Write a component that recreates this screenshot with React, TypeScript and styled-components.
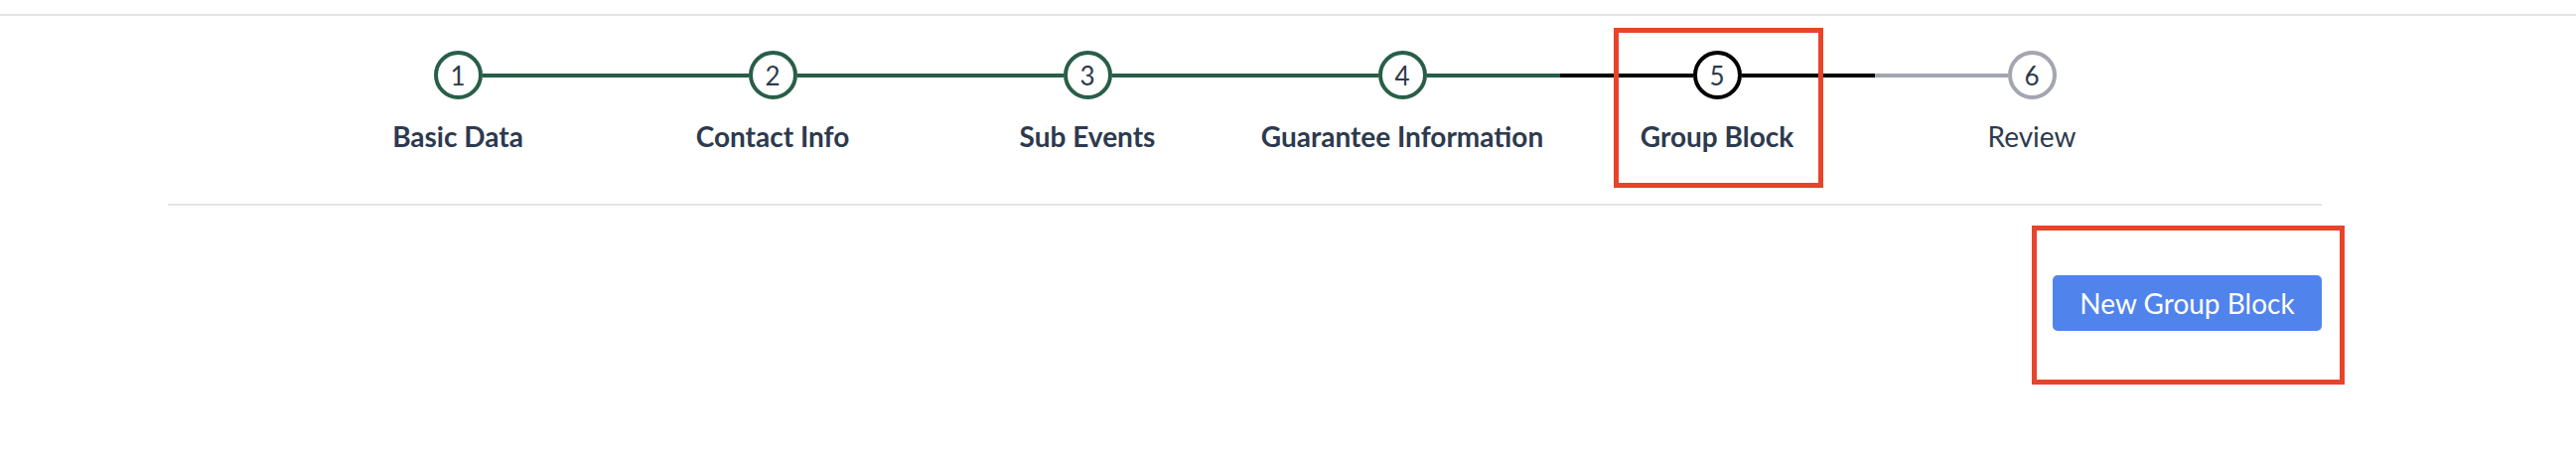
import styled, { createGlobalStyle } from "styled-components";

type Status = "done" | "active" | "todo";

const GlobalStyle = createGlobalStyle`
  body {
    margin: 0;
    background: #ffffff;
    font-family: "Lato", "Noto Sans", sans-serif;
  }
`;

const palette: Record<Status, string> = {
  done: "#285e47",
  active: "#000000",
  todo: "#a3a6b0",
};

const Page = styled.div`
  padding-top: 14px;
  min-height: 460px;
`;

const TopRule = styled.div`
  height: 2px;
  background: #e4e4e6;
`;

const Content = styled.div`
  margin-left: 169px;
  width: 2169px;
`;

const Stepper = styled.div`
  display: flex;
  justify-content: center;
  padding: 35px 0 47px;
`;

const Step = styled.div`
  position: relative;
  width: 317px;
  display: flex;
  flex-direction: column;
  align-items: center;
`;

const Track = styled.div`
  width: 100%;
  display: flex;
  align-items: center;
`;

const HalfLine = styled.div<{ $color: string; $hidden?: boolean }>`
  flex: 1;
  height: 4px;
  background: ${(p) => (p.$hidden ? "transparent" : p.$color)};
`;

const Circle = styled.div<{ $color: string }>`
  box-sizing: border-box;
  width: 49px;
  height: 49px;
  border-radius: 50%;
  border: 4px solid ${(p) => p.$color};
  display: flex;
  align-items: center;
  justify-content: center;
  font-size: 26px;
  line-height: 1;
  color: #2d3a4e;
`;

const Label = styled.div<{ $bold: boolean }>`
  margin-top: 16px;
  font-size: 28px;
  line-height: 42px;
  font-weight: ${(p) => (p.$bold ? 700 : 400)};
  color: #2d3a4e;
  white-space: nowrap;
`;

const Divider = styled.div`
  height: 2px;
  background: #e4e4e8;
`;

const Actions = styled.div`
  display: flex;
  justify-content: flex-end;
  padding-top: 70px;
`;

const ButtonWrap = styled.div`
  position: relative;
`;

const PrimaryButton = styled.button`
  height: 56px;
  width: 271px;
  border: none;
  border-radius: 5px;
  background: #5083ec;
  color: #ffffff;
  font-family: "Lato", "Noto Sans", sans-serif;
  font-size: 28px;
  cursor: pointer;
`;

const Highlight = styled.div<{ $top: number; $left: number; $width: number; $height: number }>`
  position: absolute;
  box-sizing: border-box;
  top: ${(p) => p.$top}px;
  left: ${(p) => p.$left}px;
  width: ${(p) => p.$width}px;
  height: ${(p) => p.$height}px;
  border: 5px solid #e8432b;
  pointer-events: none;
`;

const steps: { label: string; status: Status }[] = [
  { label: "Basic Data", status: "done" },
  { label: "Contact Info", status: "done" },
  { label: "Sub Events", status: "done" },
  { label: "Guarantee Information", status: "done" },
  { label: "Group Block", status: "active" },
  { label: "Review", status: "todo" },
];

const App = () => {
  return (
    <Page>
      <GlobalStyle />
      <TopRule />
      <Content>
        <Stepper>
          {steps.map((s, i) => (
            <Step key={s.label}>
              <Track>
                <HalfLine $color={palette[s.status]} $hidden={i === 0} />
                <Circle $color={palette[s.status]}>{i + 1}</Circle>
                <HalfLine $color={palette[s.status]} $hidden={i === steps.length - 1} />
              </Track>
              <Label $bold={s.status !== "todo"}>{s.label}</Label>
              {s.status === "active" && (
                <Highlight $top={-23} $left={54} $width={211} $height={161} />
              )}
            </Step>
          ))}
        </Stepper>
        <Divider />
        <Actions>
          <ButtonWrap>
            <PrimaryButton>New Group Block</PrimaryButton>
            <Highlight $top={-50} $left={-21} $width={315} $height={160} />
          </ButtonWrap>
        </Actions>
      </Content>
    </Page>
  );
};

export default App;
